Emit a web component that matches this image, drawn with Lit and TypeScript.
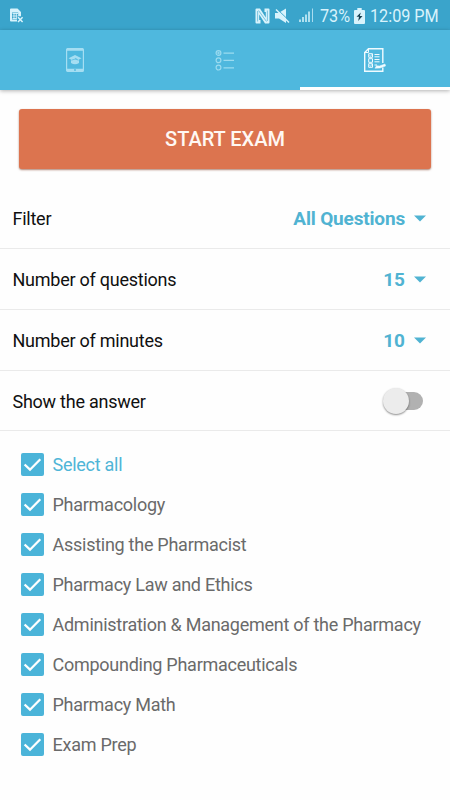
import { LitElement, html, css } from "lit";
import { customElement, state } from "lit/decorators.js";

const SETTINGS = [
  { label: "Filter", value: "All Questions" },
  { label: "Number of questions", value: "15" },
  { label: "Number of minutes", value: "10" },
];

const TOPICS = [
  "Select all",
  "Pharmacology",
  "Assisting the Pharmacist",
  "Pharmacy Law and Ethics",
  "Administration & Management of the Pharmacy",
  "Compounding Pharmaceuticals",
  "Pharmacy Math",
  "Exam Prep",
];

@customElement("status-bar")
class StatusBar extends LitElement {
  static styles = css`
    :host {
      display: flex;
      align-items: center;
      height: 30px;
      box-sizing: border-box;
      padding: 1px 11px 0 10px;
      background: #3aa4cb;
      color: #d8f3fc;
      font-size: 18px;
      line-height: 30px;
    }
    svg { display: block; flex: none; }
    .spacer { flex: 1; }
    .nfc { margin-right: 5px; }
    .mute { margin-right: 9px; }
    .signal { margin-right: 6px; }
    .battery { margin: 0 5px 0 5px; }
    .percent, .time { white-space: nowrap; }
    .percent { width: 29px; }
    .time { width: 69px; }
    .squeeze { display: inline-block; transform-origin: 0 50%; transform: scaleX(0.9); }
  `;
  render() {
    return html`
      <svg width="14" height="16" viewBox="0 0 14 16">
        <path d="M0 1.5Q0 .5 1 .5H7.5L11 4V8.2H8.2V4.6H2V11.5H7V13.5H1Q0 13.5 0 12.5Z" fill="#d8f3fc" />
        <path d="M2.5 5.5H8M2.5 8H7.5M2.5 10.5H6.5M4 5V11M6.3 5V11" stroke="#d8f3fc" stroke-width=".9" />
        <path d="M8 9.3L12.6 14M12.6 9.3L8 14" stroke="#d8f3fc" stroke-width="1.5" />
      </svg>
      <div class="spacer"></div>
      <svg class="nfc" width="15" height="16" viewBox="0 0 15 16">
        <path d="M1.5 .5H5L10.8 9.5V4H9.5V.5H13.5Q14.5 .5 14.5 1.5V14.5Q14.5 15.5 13.5 15.5H10L4.2 6.5V12H5.5V15.5H1.5Q.5 15.5 .5 14.5V1.5Q.5 .5 1.5 .5Z" fill="#d8f3fc" />
        <path d="M2.6 3V13.5M12.4 2.5V13M3.5 2.5L11.5 13.5" stroke="#3aa4cb" stroke-width=".6" />
      </svg>
      <svg class="mute" width="15" height="16" viewBox="0 0 15 16">
        <path d="M0 5H3.5L11 .5V15L4 10.5H0Z" fill="#d8f3fc" />
        <path d="M2 1L15 13.5" stroke="#3aa4cb" stroke-width="1" />
        <path d="M1 1.5L14 14.5" stroke="#d8f3fc" stroke-width="1.4" />
      </svg>
      <svg class="signal" width="15" height="15" viewBox="0 0 15 15">
        <path d="M1 11.5V14M4 9V14M7 6.5V14M10 3.5V14" stroke="#d8f3fc" stroke-width="1.5" />
        <path d="M13.5 .5V14" stroke="#a9dcef" stroke-width="1" />
      </svg>
      <div class="percent"><span class="squeeze">73%</span></div>
      <svg class="battery" width="11" height="16" viewBox="0 0 11 16">
        <path d="M3.3 0H7.7V2H10Q11 2 11 3V15Q11 16 10 16H1Q0 16 0 15V3Q0 2 1 2H3.3Z" fill="#d8f3fc" />
        <path d="M6.8 4.5L2.5 8.8H5L4.2 13L8.5 8H5.8Z" fill="#173f50" />
      </svg>
      <div class="time"><span class="squeeze">12:09 PM</span></div>
    `;
  }
}

@customElement("tab-strip")
class TabStrip extends LitElement {
  static styles = css`
    :host {
      display: grid;
      grid-template-columns: repeat(3, 1fr);
      height: 60px;
      background: #4fb8de;
      box-shadow: 0 1px 4px rgba(0, 0, 0, 0.3);
    }
    .tab {
      display: flex;
      align-items: center;
      justify-content: center;
      box-sizing: border-box;
      padding-top: 3px;
      border-bottom: 3px solid transparent;
    }
    .active { border-bottom-color: #fff; }
    svg { display: block; }
  `;
  render() {
    return html`
      <div class="tab">
        <svg width="18" height="24" viewBox="0 0 18 24">
          <rect x=".6" y=".6" width="16.8" height="22.8" rx="1" fill="none" stroke="#a5def2" stroke-width="1.2" />
          <path d="M1 1.5H17M1 22H17" stroke="#a5def2" stroke-width="2.4" />
          <circle cx="9" cy="22" r=".9" fill="#4fb8de" />
          <path d="M2.5 10.3L9 7L15.5 10.3L13 11.6V15Q9 17.4 5 15V11.6Z" fill="#a5def2" />
          <path d="M5.3 12.2Q9 10 12.7 12.2M9 10.2L11.5 11.4" stroke="#4fb8de" stroke-width=".7" fill="none" />
        </svg>
      </div>
      <div class="tab">
        <svg width="20" height="22" viewBox="0 0 20 22" fill="none" stroke="#9bdbf0">
          <circle cx="3.5" cy="4" r="2.4" stroke-width="1.2" />
          <circle cx="3.5" cy="4" r=".8" fill="#9bdbf0" />
          <circle cx="3.5" cy="11.3" r="2.4" stroke-width="1.2" />
          <circle cx="3.5" cy="18.6" r="2.4" stroke-width="1.2" />
          <path d="M8.5 4.2H19M8.5 11.4H19M8.5 18.8H19" stroke-width="1.3" />
        </svg>
      </div>
      <div class="tab active">
        <svg width="22" height="24" viewBox="0 0 22 24" fill="none" stroke="#f0fbff">
          <path d="M18.8 15V.7H4.5L.7 4.5V23.3H18.8V19.5" stroke-width="1.4" />
          <path d="M4.5 .7V4.5H.7" stroke-width="1" />
          <path d="M4.7 5.7H8.5V9.3H4.7ZM4.7 10.7H8.5V14.3H4.7ZM4.7 15.7H8.5V19.3H4.7Z" stroke-width="1" />
          <path d="M5.5 7.3L6.5 8.4L8 6.2M5.5 17.3L6.5 18.4L8 16.2" stroke-width=".7" />
          <path d="M10.5 6.5H15.5M10.5 8.8H15.5M10.5 11.5H15.5M10.5 13.8H15.5M10.5 17H13" stroke-width="1" />
          <path d="M11 20.2L12.5 17.8L15.5 18L21 16L21.5 18L16 20Z" fill="#f0fbff" stroke-width=".5" />
        </svg>
      </div>
    `;
  }
}

@customElement("app-root")
class AppRoot extends LitElement {
  static styles = css`
    :host {
      display: flex;
      flex-direction: column;
      height: 800px;
      background: #fefefe;
      font-family: Roboto, sans-serif;
      overflow: hidden;
    }
    .start {
      flex: none;
      height: 60px;
      margin: 18.5px 19px 0;
      padding: 1px 0 0;
      border: 0;
      border-radius: 3px;
      background: #dc744f;
      box-shadow: 0 1px 2px rgba(120, 50, 25, 0.6);
      color: #fff8f3;
      font: 500 20px Roboto, sans-serif;
    }
    .settings { margin-top: 19.5px; }
    .row {
      display: flex;
      align-items: center;
      justify-content: space-between;
      height: 61px;
      box-sizing: border-box;
      padding: 0 24px 0 12.5px;
      border-bottom: 1px solid #eaeaea;
      color: #101010;
      font-size: 18px;
    }
    .row:last-child { height: 60px; padding-right: 27px; }
    .label { letter-spacing: -0.25px; }
    .row:last-child .label { padding-top: 1px; }
    .value {
      display: flex;
      align-items: center;
      gap: 9px;
      color: #50b3d2;
      font-weight: 700;
      font-size: 19px;
    }
    .long { letter-spacing: -0.17px; }
    .caret { display: block; }
    .switch {
      display: flex;
      align-items: center;
      width: 36px;
      height: 18px;
      border-radius: 9px;
      background: #b1b1b1;
    }
    .knob {
      flex: none;
      width: 26px;
      height: 26px;
      margin-left: -4px;
      border-radius: 50%;
      background: #ececec;
      box-shadow: 0 1px 2px rgba(0, 0, 0, 0.45);
    }
    .topics { padding: 13px 0 0 21px; }
    .topic {
      display: flex;
      align-items: center;
      gap: 8.5px;
      height: 40px;
      color: #6a6a6a;
      font-size: 18px;
      letter-spacing: -0.265px;
      white-space: nowrap;
    }
    .topic:first-child { color: #4fb5d7; }
    .box { display: block; flex: none; }
  `;

  @state() private showAnswer = false;

  render() {
    return html`
      <status-bar></status-bar>
      <tab-strip></tab-strip>
      <button class="start">START EXAM</button>
      <div class="settings">
        ${SETTINGS.map(
          (s) => html`
            <div class="row">
              <span class="label">${s.label}</span>
              <span class="value">
                <span class=${s.value.length > 2 ? "long" : "short"}>${s.value}</span>
                <svg class="caret" width="12" height="7" viewBox="0 0 12 7"><path d="M0 .5H12L6 6.5Z" fill="#50b3d2" /></svg>
              </span>
            </div>
          `
        )}
        <div class="row">
          <span class="label">Show the answer</span>
          <span class="switch" role="switch" aria-checked=${this.showAnswer ? "true" : "false"}><span class="knob"></span></span>
        </div>
      </div>
      <div class="topics">
        ${TOPICS.map(
          (t) => html`
            <div class="topic">
              <svg class="box" width="23" height="23" viewBox="0 0 23 23">
                <rect width="23" height="23" rx="2" fill="#4bb4d9" />
                <path d="M3.6 11.5L9 16.7L19.3 6.3" fill="none" stroke="#fff" stroke-width="2.3" />
              </svg>
              <span>${t}</span>
            </div>
          `
        )}
      </div>
    `;
  }
}
